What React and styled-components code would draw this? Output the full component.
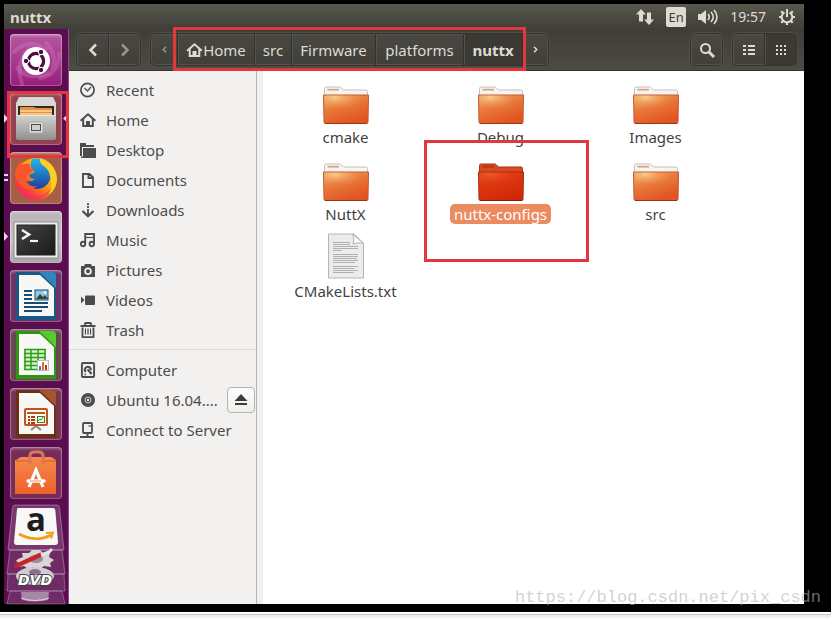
import React from "react";
import styled, { createGlobalStyle, css } from "styled-components";

const GlobalStyle = createGlobalStyle`
  * { box-sizing: border-box; }
  body {
    margin: 0;
    background: #000;
    font-family: "Noto Sans", "Open Sans", sans-serif;
    font-size: 15px;
    line-height: 20px;
    color: #4c4c4c;
  }
  button {
    font: inherit;
    color: inherit;
    margin: 0;
    padding: 0;
    border: 0;
    background: none;
  }
  svg { display: block; }
`;

const red = "#e4373d";

/* ---------- layout ---------- */

const Page = styled.div`
  position: relative;
  min-height: 100vh;
  display: flex;
  flex-direction: column;
`;

const Desktop = styled.div`
  flex: 1;
  display: flex;
  flex-direction: column;
  margin: 4px 27px 8px 4px;
`;

const BottomEdge = styled.footer`
  height: 6px;
  background: #efefef;
  border-top: 2px solid #fff;
  box-shadow: inset 0 1px #c4c4c4;
`;

const Body = styled.div`
  flex: 1;
  display: flex;
`;

const Window = styled.main`
  flex: 1;
  min-width: 0;
  display: flex;
  flex-direction: column;
`;

const WindowBody = styled.div`
  flex: 1;
  display: flex;
`;

const Marker = styled.span`
  position: absolute;
  z-index: 2;
  border: 3px solid ${red};
  pointer-events: none;
  ${(p) => p.$inset && css`inset: ${p.$inset};`}
`;

/* ---------- top panel ---------- */

const TopPanel = styled.header`
  height: 25px;
  display: flex;
  align-items: center;
  justify-content: space-between;
  padding: 0 8px 0 6px;
  color: #dfdbd2;
  background: linear-gradient(#59584e, #3f3e38);
`;

const AppTitle = styled.h1`
  margin: 0;
  font-size: 15px;
  font-weight: 700;
`;

const Indicators = styled.div`
  display: flex;
  align-items: center;
  gap: 12px;
`;

const Indicator = styled.button`
  display: flex;
  align-items: center;
  font-size: 14px;
  color: #dfdbd2;
`;

const Lang = styled.span`
  width: 20px;
  height: 20px;
  border-radius: 2px;
  background: #dfdbd2;
  color: #3c3b37;
  font-size: 13px;
  text-align: center;
`;

/* ---------- toolbar ---------- */

const Toolbar = styled.div`
  height: 42px;
  display: flex;
  align-items: center;
  gap: 9px;
  padding: 0 7px;
  color: #dfdbd2;
  background: linear-gradient(#3e3d38, #4d4b45);
  border-bottom: 1px solid #35342f;
`;

const Group = styled.div`
  position: relative;
  display: flex;
  height: 33px;
  border: 1px solid #33322e;
  border-radius: 5px;
  background: linear-gradient(#494842, #403f3a);
  box-shadow: inset 0 0 0 1px #54534c, 0 0 0 1px #4e4d47;
`;

const PathBar = styled(Group).attrs({ as: "nav" })``;

const ToolButton = styled.button`
  display: flex;
  align-items: center;
  justify-content: center;
  width: ${(p) => p.$w}px;
  color: ${(p) => (p.$dim ? "#98968d" : "#dfdbd2")};
  font-size: 15px;
  font-weight: ${(p) => (p.$active ? 700 : 400)};
  & + & {
    border-left: 1px solid #32312d;
    box-shadow: inset 1px 0 #54534c;
  }
  ${(p) =>
    p.$active &&
    css`
      background: #3a3934;
    `}
`;

const Spacer = styled.div`
  flex: 1;
`;

/* ---------- launcher ---------- */

const Launcher = styled.nav`
  width: 65px;
  display: flex;
  flex-direction: column;
  gap: 7px;
  padding: 5px 0 0 6px;
  background: #5b0d50;
  border-right: 1px solid #8a4d84;
`;

const Tile = styled.button`
  position: relative;
  flex: none;
  width: 52px;
  height: 52px;
  border-radius: 4px;
  background: ${(p) => p.$bg};
  box-shadow: inset 0 0 0 1px #ffffff38, inset 0 2px 3px #ffffff50;
`;

const Pip = styled.span`
  position: absolute;
  top: 21px;
  left: ${(p) => (p.$end ? "53px" : "-6px")};
`;

const Folded = styled.div`
  display: flex;
  flex-direction: column;
  margin: -2px 0 0 -3px;
  svg { overflow: visible; }
`;

/* ---------- sidebar ---------- */

const Sidebar = styled.nav`
  width: 188px;
  flex: none;
  padding-top: 4px;
  background: #f2f1f0;
  border-right: 1px solid #b9b6b2;
`;

const PlaceRow = styled.div`
  display: flex;
  align-items: center;
  justify-content: space-between;
  height: 30px;
  padding: 0 1px 0 11px;
`;

const Place = styled.a`
  display: flex;
  align-items: center;
  gap: 10px;
  color: #4c4c4c;
  font-size: 15px;
  white-space: nowrap;
  text-decoration: none;
`;

const Divider = styled.hr`
  margin: 4px 0 5px;
  border: 0;
  border-top: 1px solid #dcdad8;
`;

const Eject = styled.button`
  display: grid;
  place-items: center;
  width: 28px;
  height: 26px;
  border: 1px solid #b6b2ae;
  border-radius: 4px;
  background: linear-gradient(#fdfdfd, #efeeed);
`;

/* ---------- files ---------- */

const Files = styled.section`
  flex: 1;
  display: grid;
  grid-template-columns: repeat(auto-fill, 155px);
  grid-auto-rows: 68px;
  row-gap: 9px;
  align-content: start;
  padding: 8px 0 0 5px;
  background: #fff;
`;

const Gutter = styled.div`
  width: 6px;
  background: #f2f1f0;
`;

const FileItem = styled.button`
  position: relative;
  display: flex;
  flex-direction: column;
  align-items: center;
  gap: 2px;
`;

const IconBox = styled.span`
  height: 46px;
  display: flex;
  align-items: flex-end;
`;

const FileName = styled.span`
  padding: 0 4px;
  border-radius: 5px;
  font-size: 15px;
  color: ${(p) => (p.$selected ? "#fff" : "#3f3f3f")};
  background: ${(p) => (p.$selected ? "#ec8a60" : "transparent")};
`;

const Watermark = styled.div`
  position: absolute;
  z-index: 3;
  right: 10px;
  bottom: 8px;
  font: 17px/24px "Liberation Mono", monospace;
  color: #b4b4b499;
`;

/* ---------- drawings ---------- */

const Chevron = ({ back, small }) => (
  <svg
    width={small ? 5 : 10}
    height={small ? 7 : 14}
    viewBox="0 0 10 14"
    fill="none"
    stroke="currentColor"
    strokeWidth={small ? 3 : 2.5}
  >
    <path d={back ? "M8 1.5 2.5 7 8 12.5" : "M2 1.5 7.5 7 2 12.5"} />
  </svg>
);

const placeIcons = {
  Recent: (
    <g fill="none" stroke="currentColor">
      <circle cx="7.5" cy="8" r="6.6" strokeWidth="1.7" />
      <path d="M4.5 6 7.5 9 11 5" strokeWidth="1.3" />
    </g>
  ),
  Home: (
    <path
      fill="currentColor"
      fillRule="evenodd"
      d="M8 1 0 8l1 1.4L2.2 8.500V15h11.600V8.500L15 9.400 16 8ZM8 3.600l3.800 3.400V13H10V9H6v4H4.200V7Z"
    />
  ),
  Desktop: (
    <g fill="currentColor">
      <path d="M0 1h6v2h8v2H2v9H0Z" />
      <path d="M3 6h13v10H1V14.500h2Z" />
    </g>
  ),
  Documents: <path d="M3 2h6.500L13 5.500V15H3ZM8.500 2v4H13" fill="none" stroke="currentColor" strokeWidth="1.900" />,
  Downloads: (
    <g fill="none" stroke="currentColor" strokeWidth="1.800">
      <path d="M8 1v8" strokeDasharray="2 1" />
      <path d="M8 9v5" />
      <path d="M2.500 9 8 14.200 13.500 9" strokeWidth="2.200" />
    </g>
  ),
  Music: (
    <g fill="none" stroke="currentColor" strokeWidth="1.900">
      <circle cx="3" cy="12" r="2.200" />
      <circle cx="11.800" cy="12" r="2.200" />
      <path d="M5.200 12V2H14v10" />
      <path d="M6 5.500h8" strokeWidth="1.200" />
    </g>
  ),
  Pictures: (
    <path
      fill="currentColor"
      fillRule="evenodd"
      d="M1 4h3l1-2h6l1 2h3v11H1ZM8 5.400a3.800 3.800 0 1 0 0 7.600 3.800 3.800 0 0 0 0-7.600ZM8 7.200a2 2 0 1 1 0 4 2 2 0 0 1 0-4Z"
    />
  ),
  Videos: (
    <g fill="currentColor">
      <path d="M1 4.500 4.500 8 1 11.500Z" />
      <rect x="5" y="3.500" width="10" height="9.500" rx="1" />
    </g>
  ),
  Trash: (
    <g fill="none" stroke="currentColor">
      <path d="M4.500 3 5.500 1h5l1 2M.5 4h15" strokeWidth="1.800" />
      <path d="M2.500 5.500V15.200h11V5.500" strokeWidth="1.800" />
      <path d="M5.500 6.500v6M8 6.500v6M10.500 6.500v6" strokeWidth="1.200" />
    </g>
  ),
  Computer: (
    <g fill="none" stroke="currentColor">
      <rect x="1.900" y="1" width="12.200" height="14" rx="1" strokeWidth="1.900" />
      <path d="M5.800 10A3 3 0 1 1 10.800 8.200" strokeWidth="2.200" />
      <path d="m7.600 7.400 4 4.600" strokeWidth="2.200" />
      <path d="M4.500 12.500h1.500" strokeWidth="1.500" />
    </g>
  ),
  Disc: (
    <g>
      <circle cx="8" cy="8" r="7" fill="currentColor" />
      <circle cx="8" cy="8" r="3" fill="none" stroke="#d9d8d7" strokeWidth=".9" />
      <circle cx="8" cy="8" r="1.200" fill="#f2f1f0" />
    </g>
  ),
  Server: (
    <g fill="none" stroke="currentColor" strokeWidth="1.800">
      <rect x="3" y="1" width="9" height="10" rx="1" />
      <path d="M7.500 11v4M0 15h14" />
      <path d="M8.500 4H11" strokeWidth="1.200" />
    </g>
  ),
};

const PlaceIcon = ({ name }) => (
  <svg width="16" height="16" viewBox="0 0 16 16" aria-hidden="true">
    {placeIcons[name]}
  </svg>
);

const FolderIcon = ({ id, selected }) => (
  <svg width="48" height="39" viewBox="0 0 48 39" aria-hidden="true">
    <defs>
      <linearGradient id={`${id}-base`} x1="0" y1="0" x2=".5" y2="1">
        <stop offset="0" stopColor={selected ? "#e2491c" : "#eda45f"} />
        <stop offset=".5" stopColor={selected ? "#dd3410" : "#e8783a"} />
        <stop offset="1" stopColor={selected ? "#cf2a08" : "#e25423"} />
      </linearGradient>
      <radialGradient id={`${id}-glow`} cx=".25" cy=".1" r=".65">
        <stop offset="0" stopColor={selected ? "#e8592a" : "#f8cb8d"} />
        <stop offset="1" stopColor={selected ? "#e03c12" : "#ee8a45"} stopOpacity="0" />
      </radialGradient>
    </defs>
    <path
      d="M2.500 10V2.500Q2.500 1 4 1H17q2 0 2.500 1l2 2H44q1.500 0 1.500 1.500V10Z"
      fill={selected ? "#d84a24" : "#f7f4f2"}
      stroke={selected ? "#a83214" : "#c9c0ba"}
    />
    <path d="M5.500 3.700h11.500" stroke={selected ? "#b5330f" : "#d8a27c"} strokeWidth="1.700" />
    <path
      d="M1.500 9h45L46 36q0 1.500-1.500 1.500h-41Q2 37.500 2 36Z"
      fill={`url(#${id}-base)`}
      stroke={selected ? "#a52a0c" : "#c2592c"}
    />
    <path d="M2 9.500h44v11Q26 20 2.500 28Z" fill={`url(#${id}-glow)`} />
    <path d="M3 37.500h42" stroke={selected ? "#7e1c08" : "#94371b"} />
  </svg>
);

const TextFileIcon = () => (
  <svg width="38" height="46" viewBox="0 0 38 46" aria-hidden="true">
    <path d="M1.500 1h25.500L36.500 10v35h-35Z" fill="#ececec" stroke="#b5b5b5" />
    <path d="M25.500 1Q28 6 26 11q5-2 10.500-.5Z" fill="#fbfbfb" stroke="#b5b5b5" />
    <path
      d="M6 9.500h17M6 11.500h17M6 13.500h25M6 15.500h25M6 17.500h9M6 21.500h25M6 23.500h25M6 25.500h24M6 27.500h25M6 29.500h22M6 33.500h25M6 35.500h21M6 37.500h25M6 39.500h21"
      stroke="#b0b0b0"
    />
  </svg>
);

const UbuntuArt = () => (
  <svg width="52" height="52" viewBox="0 0 52 52">
    <g fill="none" stroke="#dd8ccc" strokeLinecap="round">
      <path d="M4 18Q18 4 36 15M12 50Q5 30 18 15M49 20Q48 42 30 44M36 9Q48 20 42 37" strokeWidth="4" opacity=".28" />
      <path d="M8 34Q16 46 38 39" strokeWidth="5" opacity=".3" />
    </g>
    <circle cx="26" cy="27" r="14" fill="#fff" />
    <circle
      cx="26"
      cy="27"
      r="7.600"
      fill="none"
      stroke="#4a0f42"
      strokeWidth="3.200"
      strokeDasharray="14.300 1.620"
      strokeDashoffset="7.200"
    />
    <g fill="#4a0f42" stroke="#fff">
      <circle cx="16" cy="27" r="2.700" />
      <circle cx="31" cy="18" r="2.700" />
      <circle cx="31" cy="36" r="2.700" />
    </g>
  </svg>
);

const FilesArt = () => (
  <svg width="52" height="52" viewBox="0 0 52 52">
    <defs>
      <linearGradient id="cabinet" x1="0" y1="0" x2="0" y2="1">
        <stop offset="0" stopColor="#d3d3d2" />
        <stop offset="1" stopColor="#8f8f8e" />
      </linearGradient>
    </defs>
    <path d="M9 4h34l3 6v17H6V10Z" fill="#d8d7d5" />
    <path d="M8 13h36v11H8Z" fill="#2f2924" />
    <path d="M10 14h14l2 1h16v8H10Z" fill="#e98f3b" />
    <path d="M10 18h32M10 21h32" stroke="#fbdc9d" strokeWidth="1.500" />
    <rect x="6" y="22" width="40" height="25" rx="2" fill="url(#cabinet)" />
    <path d="M7 22.500h38" stroke="#e7e7e7" />
    <rect x="19" y="29" width="14" height="11" rx="2" fill="#e0e0df" stroke="#a9a9a8" />
    <rect x="21.500" y="31.500" width="9" height="6" fill="#cfcfcf" stroke="#4b4b4b" />
  </svg>
);

const FirefoxArt = () => (
  <svg width="52" height="52" viewBox="0 0 52 52">
    <defs>
      <linearGradient id="fox" x1="1" y1="0" x2="0" y2="1">
        <stop offset="0" stopColor="#ffe226" />
        <stop offset=".45" stopColor="#ff9a12" />
        <stop offset=".75" stopColor="#fb3a3c" />
        <stop offset="1" stopColor="#e0158b" />
      </linearGradient>
      <linearGradient id="globe" x1="0" y1="0" x2="0" y2="1">
        <stop offset="0" stopColor="#25b6ec" />
        <stop offset="1" stopColor="#1b3d9c" />
      </linearGradient>
    </defs>
    <circle cx="26" cy="27" r="21" fill="url(#fox)" />
    <path d="M22 7q10-2 16 5 5 7 2 16-4 9-14 9-10-1-12-9 7 3 11-1-5 0-6-4l6-3-4-4q-1-5 1-9Z" fill="url(#globe)" />
    <path d="M6 17q2-5 5-8l1 4q4-2 8-1-1 3 1 5l4 1-6 4q-5 3-2 8 4 6 11 4-9 7-17 0T6 17Z" fill="#f9562b" />
    <path d="M30 6q11 3 15 13 5 14-6 23 4-9 1-18-1-6-5-9-6-3-5-9Z" fill="#ffcf23" />
    <path d="M9 34q7 10 20 9 8-1 13-8-5 13-18 13-11-1-15-14Z" fill="#f32f70" opacity=".55" />
  </svg>
);

const TerminalArt = () => (
  <svg width="52" height="52" viewBox="0 0 52 52">
    <defs>
      <linearGradient id="screen" x1="0" y1="0" x2="1" y2="1">
        <stop offset="0" stopColor="#454545" />
        <stop offset="1" stopColor="#191919" />
      </linearGradient>
    </defs>
    <rect x="4" y="11" width="44" height="36" rx="1" fill="#f0f0f0" stroke="#8d8d8d" />
    <rect x="7" y="14" width="38" height="30" fill="url(#screen)" stroke="#222" />
    <path d="m12 19 7 4.500-7 4.500" fill="none" stroke="#f3f3f3" strokeWidth="2.600" />
    <path d="M20 30h8" stroke="#f3f3f3" strokeWidth="2.200" />
  </svg>
);

const OfficePage = ({ edge, tip, children }) => (
  <svg width="52" height="52" viewBox="0 0 52 52">
    <path d="M6 2h25l15 15v33H6Z" fill={edge} />
    <path d="M29 2h13q4 0 4 4v12Z" fill={tip} />
    <path d="M9 5h21l14 13v28H9Z" fill="#f7f7f5" />
    {children}
  </svg>
);

const WriterArt = () => (
  <OfficePage edge="#1b5684" tip="#2f86bb">
    <path d="M14 21h8M14 25h8M14 29h8M14 33h24M14 37h24M14 41h18" stroke="#164c74" strokeWidth="2" />
    <rect x="25" y="20" width="13" height="10" fill="#8fc8ea" stroke="#164c74" />
    <path d="m26 29 4-5 3 3 2-2 3 4Z" fill="#2f4a33" />
    <circle cx="35" cy="22.500" r="1.300" fill="#fff" />
  </OfficePage>
);

const CalcArt = () => (
  <OfficePage edge="#2f9414" tip="#55cc2e">
    <rect x="14" y="20" width="22" height="21" fill="#d9f5cd" />
    <path
      d="M14 20.500h22M14 24.500h22M14 28.500h22M14 32.500h22M14 36.500h22M14 40.500h22M15 20v21M21 20v21M28 20v21M35 20v21"
      stroke="#2f9b1b"
      strokeWidth="1.500"
    />
    <rect x="27.500" y="31.500" width="11" height="10" fill="#fff" stroke="#bbb" />
    <path d="M30 41v-4" stroke="#2a83c4" strokeWidth="2" />
    <path d="M33 41v-8" stroke="#df7320" strokeWidth="2" />
    <path d="M36 41v-5" stroke="#b53b12" strokeWidth="2" />
  </OfficePage>
);

const ImpressArt = () => (
  <OfficePage edge="#6e2d16" tip="#a4552f">
    <path d="m21 42 5-4 5 4" fill="none" stroke="#888" strokeWidth="2" />
    <rect x="15" y="21" width="22" height="16" rx="1" fill="#fff8f2" stroke="#bf5420" strokeWidth="2" />
    <path d="M17 25h18" stroke="#bf5420" strokeWidth="2" />
    <path d="M18 29h7M18 32h7M18 35h7" stroke="#a93d16" strokeWidth="2" strokeDasharray="2 1 5" />
    <rect x="27.500" y="28.500" width="7" height="6" fill="#eaffdf" stroke="#4a7b3a" />
    <path d="m28 33 2-2 1 1 2-3" fill="none" stroke="#39981f" />
  </OfficePage>
);

const StoreArt = () => (
  <svg width="52" height="52" viewBox="0 0 52 52">
    <defs>
      <linearGradient id="bag" x1="0" y1="0" x2="0" y2="1">
        <stop offset="0" stopColor="#f68a4c" />
        <stop offset="1" stopColor="#ec6129" />
      </linearGradient>
    </defs>
    <path d="M6 13 11 10h30l5 3v34H5V13Z" fill="url(#bag)" />
    <path d="M20 17V9q0-4 4-4h5q4 0 4 4v8" fill="none" stroke="#e0745a" strokeWidth="3" />
    <path d="M6 14h13M34 14h12" stroke="#d65a28" />
    <path d="m19 40 7-17 7 17" fill="none" stroke="#fff" strokeWidth="3.200" />
    <path d="M18 34h16" stroke="#fff" strokeWidth="3.400" strokeLinecap="round" />
    <path d="M20 34h11" stroke="#ef7439" strokeWidth=".8" />
  </svg>
);

const AmazonArt = () => (
  <svg width="58" height="46" viewBox="0 0 58 46">
    <path d="M8 1h42q2 0 2.500 3L57 46H1L5.500 4Q6 1 8 1Z" fill="#ffffff2e" stroke="#ffffff50" />
    <path d="M10 5q0-1 2-1h34q2 0 2.300 2L51 38q0 3-3 3H10q-3 0-3-3Z" fill="#f8f8f7" />
    <text x="29" y="27" textAnchor="middle" fontFamily="Open Sans, sans-serif" fontSize="33" fontWeight="700" fill="#1d1d1d">
      a
    </text>
    <path d="M12 30q17 9 32 1" fill="none" stroke="#f49b1b" strokeWidth="2.600" />
    <path d="m39 29 7-.5-2 6" fill="none" stroke="#f49b1b" strokeWidth="2" />
  </svg>
);

const SettingsArt = () => (
  <svg width="58" height="24" viewBox="0 0 58 24">
    <path d="M3 0h52l3 24H0Z" fill="#ffffff20" stroke="#ffffff50" />
    <path
      d="m11 9 5-2-1-4 7 0 3-3h8l3 3h7l-1 4 5 3-4 3 1 4-7-1-4 3-6-2-6 2-4-3-6 1 1-4-3-2Z"
      fill="#d9d5d6"
    />
    <ellipse cx="29" cy="9" rx="7" ry="4" fill="#99899a" />
    <path d="M9 16 33 5" stroke="#c42727" strokeWidth="4.500" strokeLinecap="round" />
    <path d="m34 5 8-3 3-3" fill="none" stroke="#e5e5e5" strokeWidth="3" />
  </svg>
);

const DiscArt = () => (
  <svg width="58" height="17" viewBox="0 0 58 17">
    <path d="M1 0h56l1 17H0Z" fill="#ffffff20" stroke="#ffffff40" />
    <ellipse cx="28" cy="2" rx="19" ry="9" fill="#d4ccd3" />
    <ellipse cx="28" cy="-2" rx="6" ry="3" fill="#8f6c8e" />
    <text
      x="28"
      y="11"
      textAnchor="middle"
      fontFamily="DejaVu Sans, sans-serif"
      fontSize="14"
      fontWeight="700"
      fontStyle="italic"
      fill="#fff"
      stroke="#444"
      strokeWidth="2"
      paintOrder="stroke"
    >
      DVD
    </text>
  </svg>
);

const BinArt = () => (
  <svg width="58" height="13" viewBox="0 0 58 13">
    <path d="M3 0 0 13h58L55 0Z" fill="#ffffff20" stroke="#ffffff40" />
    <path d="M14 1h28l-1 8q-13 3-26 0Z" fill="#a888a7" />
    <path d="M14 7q14 5 28 0" fill="none" stroke="#e3d7e2" />
  </svg>
);

const Triangle = ({ left }) => (
  <svg width="5" height="9" viewBox="0 0 5 9">
    <path d={left ? "M5 0v9L0 4.500Z" : "M0 0v9L4 4.500Z"} fill="#e8d5e8" />
  </svg>
);

const DoublePip = () => (
  <svg width="5" height="9" viewBox="0 0 5 9">
    <path d="M0 2h4M0 7h4" stroke="#e8d5e8" strokeWidth="2" />
  </svg>
);

const HomeGlyph = () => (
  <svg width="17" height="16" viewBox="0 0 16 16" aria-hidden="true">
    {placeIcons.Home}
  </svg>
);

/* ---------- data ---------- */

const apps = [
  { name: "Search your computer", art: UbuntuArt, bg: "linear-gradient(#b457a1, #971f7c)" },
  { name: "Files", art: FilesArt, bg: "#96404f", pip: "single", focused: true, marked: true },
  { name: "Firefox", art: FirefoxArt, bg: "#a65f45", pip: "double" },
  { name: "Terminal", art: TerminalArt, bg: "linear-gradient(#b9b4b8, #c6c2c5 60%, #aaa5a9)", pip: "single" },
  { name: "Writer", art: WriterArt, bg: "#693467" },
  { name: "Calc", art: CalcArt, bg: "#68464f" },
  { name: "Impress", art: ImpressArt, bg: "#75334f" },
  { name: "Software", art: StoreArt, bg: "#762c5a" },
];

const folded = [
  { name: "Amazon", art: AmazonArt },
  { name: "System Settings", art: SettingsArt },
  { name: "DVD", art: DiscArt },
  { name: "Trash bin", art: BinArt },
];

const places = ["Recent", "Home", "Desktop", "Documents", "Downloads", "Music", "Pictures", "Videos", "Trash"];

const devices = [
  { label: "Computer", icon: "Computer" },
  { label: "Ubuntu 16.04....", icon: "Disc", ejectable: true },
  { label: "Connect to Server", icon: "Server" },
];

const files = [
  { name: "cmake" },
  { name: "Debug" },
  { name: "Images" },
  { name: "NuttX" },
  { name: "nuttx-configs", selected: true },
  { name: "src" },
  { name: "CMakeLists.txt", text: true },
];

/* ---------- parts ---------- */

const StatusArea = () => (
  <Indicators>
    <Indicator aria-label="Network">
      <svg width="18" height="18" viewBox="0 0 18 18" fill="currentColor">
        <path d="M5 1 10 6.500H7v7H3v-7H0Z" />
        <path d="M13 17 8 11.500h3v-7h4v7h3Z" />
      </svg>
    </Indicator>
    <Indicator aria-label="Keyboard layout">
      <Lang>En</Lang>
    </Indicator>
    <Indicator aria-label="Sound">
      <svg width="20" height="16" viewBox="0 0 20 16">
        <path d="M0 5h3l5-4v14l-5-4H0Z" fill="currentColor" />
        <path
          d="M10 5q2.500 3 0 6M13 3q4.500 5 0 10M16 1q6 7 0 14"
          fill="none"
          stroke="currentColor"
          strokeWidth="1.600"
        />
      </svg>
    </Indicator>
    <Indicator>19:57</Indicator>
    <Indicator aria-label="Session">
      <svg width="18" height="18" viewBox="0 0 18 18" fill="none" stroke="currentColor">
        <path d="M6.500 4.400a5.300 5.300 0 1 0 5 0" strokeWidth="2" />
        <path d="M9 1v8" strokeWidth="2" />
        <path
          d="M14 9h3M4 9H1M9 14v3M12.500 12.500l2.200 2.200M5.500 12.500l-2.200 2.200M12.800 5.200l2-2M5.200 5.200l-2-2"
          strokeWidth="2.200"
        />
      </svg>
    </Indicator>
  </Indicators>
);

const PlaceItem = ({ label, icon, ejectable }) => (
  <PlaceRow>
    <Place href="#">
      <PlaceIcon name={icon} />
      {label}
    </Place>
    {ejectable && (
      <Eject aria-label="Eject">
        <svg width="14" height="12" viewBox="0 0 14 12" fill="#3c3c3c">
          <path d="M7 0 13.500 7H.5ZM1 9h12v2H1Z" />
        </svg>
      </Eject>
    )}
  </PlaceRow>
);

export default function App() {
  return (
    <Page>
      <GlobalStyle />
      <Desktop>
        <TopPanel>
          <AppTitle>nuttx</AppTitle>
          <StatusArea />
        </TopPanel>
        <Body>
          <Launcher aria-label="Launcher">
            {apps.map(({ name, art: Art, bg, pip, focused, marked }) => (
              <Tile key={name} aria-label={name} $bg={bg}>
                <Art />
                {pip && <Pip>{pip === "double" ? <DoublePip /> : <Triangle />}</Pip>}
                {focused && (
                  <Pip $end>
                    <Triangle left />
                  </Pip>
                )}
                {marked && <Marker $inset="-2px -7px -13px -3px" />}
              </Tile>
            ))}
            <Folded>
              {folded.map(({ name, art: Art }) => (
                <button key={name} aria-label={name}>
                  <Art />
                </button>
              ))}
            </Folded>
          </Launcher>
          <Window>
            <Toolbar>
              <Group>
                <ToolButton $w={31} aria-label="Back">
                  <Chevron back />
                </ToolButton>
                <ToolButton $w={32} $dim aria-label="Forward">
                  <Chevron />
                </ToolButton>
              </Group>
              <PathBar aria-label="Path">
                <ToolButton $w={26} $dim aria-label="Scroll path left">
                  <Chevron back small />
                </ToolButton>
                <ToolButton $w={77}>
                  <HomeGlyph />
                  Home
                </ToolButton>
                <ToolButton $w={37}>src</ToolButton>
                <ToolButton $w={84}>Firmware</ToolButton>
                <ToolButton $w={88}>platforms</ToolButton>
                <ToolButton $w={59} $active>
                  nuttx
                </ToolButton>
                <ToolButton $w={26} aria-label="Scroll path right">
                  <Chevron small />
                </ToolButton>
                <Marker $inset="-7px 22px -6px 22px" />
              </PathBar>
              <Spacer />
              <Group>
                <ToolButton $w={31} aria-label="Search">
                  <svg width="16" height="16" viewBox="0 0 16 16" fill="none" stroke="currentColor">
                    <circle cx="6.500" cy="6.500" r="4.500" strokeWidth="2" />
                    <path d="m10 10 5 5" strokeWidth="2.800" />
                  </svg>
                </ToolButton>
              </Group>
              <Group>
                <ToolButton $w={31} aria-label="List view">
                  <svg width="12" height="12" viewBox="0 0 12 12" stroke="currentColor" strokeWidth="2">
                    <path d="M0 2h3M0 6h3M0 10h3M5 2h7M5 6h7M5 10h7" />
                  </svg>
                </ToolButton>
                <ToolButton $w={32} $active aria-label="Icon view">
                  <svg width="10" height="10" viewBox="0 0 10 10" stroke="currentColor" strokeWidth="2">
                    <path d="M0 1h10M0 5h10M0 9h10" strokeDasharray="2 2" />
                  </svg>
                </ToolButton>
              </Group>
            </Toolbar>
            <WindowBody>
              <Sidebar aria-label="Places">
                {places.map((p) => (
                  <PlaceItem key={p} label={p} icon={p} />
                ))}
                <Divider />
                {devices.map((d) => (
                  <PlaceItem key={d.label} {...d} />
                ))}
              </Sidebar>
              <Gutter />
              <Files aria-label="Folder contents">
                {files.map(({ name, selected, text }, i) => (
                  <FileItem key={name}>
                    <IconBox>
                      {text ? <TextFileIcon /> : <FolderIcon id={`folder${i}`} selected={selected} />}
                    </IconBox>
                    <FileName $selected={selected}>{name}</FileName>
                    {selected && <Marker $inset="-16px -11px -38px 1px" />}
                  </FileItem>
                ))}
              </Files>
            </WindowBody>
          </Window>
        </Body>
      </Desktop>
      <BottomEdge />
      <Watermark>https://blog.csdn.net/pix_csdn</Watermark>
    </Page>
  );
}
